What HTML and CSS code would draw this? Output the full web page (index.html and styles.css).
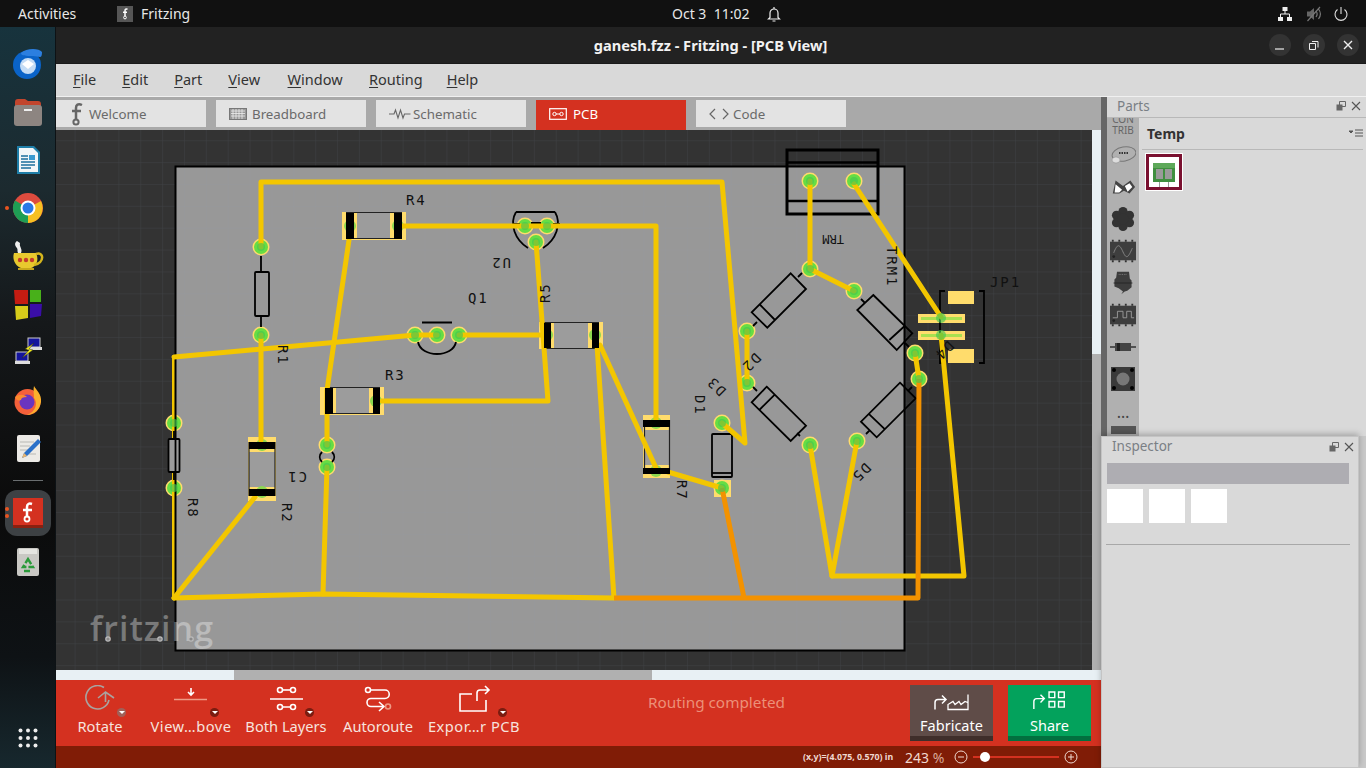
FILE: index.html
```html
<!DOCTYPE html>
<html lang="en">
<head>
<meta charset="utf-8">
<title>Fritzing</title>
<link rel="stylesheet" href="styles.css">
</head>
<body>
<header class="topbar">
  <span class="activities">Activities</span>
  <span class="appname">
    <svg class="appicon" viewBox="0 0 16 16"><rect width="16" height="16" fill="#565656"/><path d="M10.500 3.200C9 2.700 8 3.300 8 4.800V10M6 6.200h4" fill="none" stroke="#fff" stroke-width="1.500"/><circle cx="8" cy="11.500" r="1.400" fill="none" stroke="#fff"/></svg>
    Fritzing
  </span>
  <span class="clock"><span>Oct 3&nbsp; 11:02</span><svg class="bell" viewBox="0 0 16 16"><path d="M8 1v1.500M4 11.500V7a4 4 0 0 1 8 0v4.500l1.500 1.500h-11zM6.500 15h3" fill="none" stroke="#eee" stroke-width="1.200"/></svg></span>
  <span class="tray">
    <svg class="tray-ico tray-net" viewBox="0 0 16 16"><path d="M5.500 1h5v4h-5zM1 11h5v4H1zM10 11h5v4h-5z" fill="#eee"/><path d="M8 5v3M3.500 11V8h9v3" fill="none" stroke="#eee" stroke-width="1"/></svg>
    <svg class="tray-ico" viewBox="0 0 16 16"><path d="M1 5.500h3l4-3.500v12l-4-3.500H1z" fill="#666"/><path d="M10 5c1.300 1.700 1.300 4.300 0 6M12.500 3c2.300 3 2.300 7 0 10M1.500 15L14 1" fill="none" stroke="#777" stroke-width="1.200"/></svg>
    <svg class="tray-ico" viewBox="0 0 16 16"><path d="M8 1v7M4.500 3.500a6 6 0 1 0 7 0" fill="none" stroke="#ddd" stroke-width="1.100"/></svg>
  </span>
</header>

<div class="desktop">
  <nav class="dock">
    <div class="dock-item"><svg viewBox="0 0 32 32" class="dock-ico"><circle cx="15" cy="17" r="14" fill="#0a63c8"/><path d="M9 5C14 0 27 0 30 4 30 12 27 8 21 8 14 8 9 8 9 5z" fill="#2c7fe0"/><circle cx="16" cy="18" r="8" fill="#c4dcf5"/><path d="M10 16l6 5 6-5-6-4z" fill="#fff"/></svg></div>
    <div class="dock-item"><svg viewBox="0 0 32 32" class="dock-ico"><path d="M3 6q0-3 3-3h7l3 2h10q3 0 3 3v4H3z" fill="#c2452d"/><rect x="2" y="9" width="28" height="21" rx="3" fill="#8d8581"/><rect x="12" y="13" width="8" height="2" fill="#eee"/></svg></div>
    <div class="dock-item"><svg viewBox="0 0 32 32" class="dock-ico"><path d="M5 2h17l6 6v22H5z" fill="#1e7ea8"/><path d="M7 4h14l5 5v19H7z" fill="#f2f6f8"/><path d="M9 12h7M9 15h7M9 18h14M9 21h14M9 24h10" stroke="#1d6f9c" stroke-width="1.500"/><rect x="17" y="11" width="6" height="5" fill="#3a9ad0"/></svg></div>
    <div class="dock-item"><span class="run-dot"></span><svg viewBox="0 0 32 32" class="dock-ico"><circle cx="16" cy="16" r="15" fill="#dd4b3e"/><path d="M16 16 29 9a15 15 0 0 1-13 22z" fill="#f6c022"/><path d="M16 16 16 31A15 15 0 0 1 3 8.500z" fill="#1e9e54"/><circle cx="16" cy="16" r="7.500" fill="#fff"/><circle cx="16" cy="16" r="5.500" fill="#2a79e6"/></svg></div>
    <div class="dock-item"><svg viewBox="0 0 32 32" class="dock-ico"><path d="M2 13h22c3 6 1 13-5 15H9C3 26 0 19 2 13z" fill="#e8c92e"/><path d="M24 14c8-3 9 9-2 11" fill="none" stroke="#d4b51d" stroke-width="2.500"/><path d="M5 1c-3 2-2 5 0 7 1 2 0 3 1 5h3C11 9 7 7 8 3z" fill="#eee"/><circle cx="8" cy="20" r="2.200" fill="#c43b2b"/><circle cx="14" cy="20" r="2.200" fill="#c43b2b"/><circle cx="20" cy="20" r="2.200" fill="#c43b2b"/><path d="M6 28h16v2H6z" fill="#c6a71a"/></svg></div>
    <div class="dock-item"><svg viewBox="0 0 32 32" class="dock-ico"><path d="M2 2h14v14H3z" fill="#c41c12"/><path d="M18 2h11v12H18z" fill="#48b01a"/><path d="M3 18h13v12L4 32z" fill="#d6cc1a"/><path d="M18 16h12l-1 12-11 2z" fill="#3a0ea8"/></svg></div>
    <div class="dock-item"><svg viewBox="0 0 32 32" class="dock-ico"><rect x="16" y="2" width="12" height="9" fill="#14149c" stroke="#ccc"/><rect x="15" y="11" width="15" height="3" fill="#ddd"/><rect x="4" y="16" width="12" height="9" fill="#14149c" stroke="#ccc"/><rect x="3" y="25" width="15" height="3" fill="#ddd"/><path d="M22 7l-9 6 4 1-7 8 11-8-4-1z" fill="#f4ef18" stroke="#222" stroke-width=".5"/></svg></div>
    <div class="dock-item"><svg viewBox="0 0 32 32" class="dock-ico"><circle cx="15.500" cy="18" r="13" fill="#f4603a"/><path d="M22 2c2 4 8 8 7 16-1 8-8 13-14 13 9-3 11-12 7-17 0-4-1-8 0-12z" fill="#fcb02c"/><circle cx="15" cy="18" r="7.500" fill="#6a35c0"/><path d="M3 13c4-3 9-3 12 0-4 0-6 1-6 3-3 1-5 0-6-3z" fill="#fb8a2c"/></svg></div>
    <div class="dock-item"><svg viewBox="0 0 32 32" class="dock-ico"><rect x="5" y="3" width="23" height="27" rx="2" fill="#eceae6"/><path d="M8 10h14M8 14h10M8 18h8M14 22h10" stroke="#b8b8b4" stroke-width="1.200"/><path d="M26 7l3 3-14 14-5 2 2-5z" fill="#2a70c8"/><path d="M12 21l3 3-5 2z" fill="#eab46c"/></svg></div>
    <div class="dock-sep"></div>
    <div class="dock-active">
      <span class="run-dots"><i></i><i></i></span>
      <svg viewBox="0 0 30 30" class="dock-fritz"><rect width="30" height="30" fill="#d43120"/><rect y="27" width="30" height="3" fill="#8a2010"/><path d="M19 6c-3-1-5 0-5 3v9M10 12h9" fill="none" stroke="#fff" stroke-width="2.500"/><circle cx="14" cy="21" r="2.500" fill="none" stroke="#fff" stroke-width="1.800"/></svg>
    </div>
    <div class="dock-item"><svg viewBox="0 0 32 32" class="dock-ico"><rect x="5" y="2" width="22" height="28" rx="2" fill="#c9c8c4"/><rect x="7" y="3" width="18" height="5" fill="#e4e4e0"/><path d="M16 13l5 8h-10zM12 25h8" fill="none" stroke="#2a9a3a" stroke-width="2.400" stroke-dasharray="6 2"/></svg></div>
    <div class="dock-apps"><svg viewBox="0 0 20 20" class="apps-ico"><g fill="#eee"><circle cx="2.500" cy="2.500" r="2"/><circle cx="10" cy="2.500" r="2"/><circle cx="17.500" cy="2.500" r="2"/><circle cx="2.500" cy="10" r="2"/><circle cx="10" cy="10" r="2"/><circle cx="17.500" cy="10" r="2"/><circle cx="2.500" cy="17.500" r="2"/><circle cx="10" cy="17.500" r="2"/><circle cx="17.500" cy="17.500" r="2"/></g></svg></div>
  </nav>

  <main class="window">
    <div class="titlebar">
      <span class="title">ganesh.fzz - Fritzing - [PCB View]</span>
      <span class="win-btns">
        <span class="win-btn"><svg viewBox="0 0 12 12"><path d="M1 10h9" stroke="#eee" stroke-width="1.200"/></svg></span>
        <span class="win-btn"><svg viewBox="0 0 12 12"><path d="M1.500 4.500h6v6h-6zM4 2.500h6v6" fill="none" stroke="#eee" stroke-width="1"/></svg></span>
        <span class="win-btn"><svg viewBox="0 0 12 12"><path d="M2 2l8 8M10 2l-8 8" stroke="#eee" stroke-width="1.400"/></svg></span>
      </span>
    </div>
    <div class="menubar">
      <span class="menu-file"><u>F</u>ile</span>
      <span class="menu-edit"><u>E</u>dit</span>
      <span class="menu-part"><u>P</u>art</span>
      <span class="menu-view"><u>V</u>iew</span>
      <span class="menu-window"><u>W</u>indow</span>
      <span class="menu-routing"><u>R</u>outing</span>
      <span class="menu-help"><u>H</u>elp</span>
    </div>
    <div class="workspace">
      <section class="sketch">
        <div class="tabs">
          <div class="tab tab-wel"><svg class="tab-f" viewBox="0 0 14 24"><path d="M12 3C8 1 6 3 6 6v11M2 9h9" fill="none" stroke="#666" stroke-width="2.500"/><circle cx="6" cy="20" r="2.600" fill="none" stroke="#666" stroke-width="2"/></svg>Welcome</div>
          <div class="tab tab-bb"><svg class="tab-ico" viewBox="0 0 18 12"><rect x=".5" y=".5" width="17" height="11" fill="#999" stroke="#777"/><path d="M2 3h14M2 5.500h14M2 8h14M4 1v10M7 1v10M10 1v10M13 1v10" stroke="#eee" stroke-width=".8"/></svg>Breadboard</div>
          <div class="tab tab-sch"><svg class="tab-ico" viewBox="0 0 22 12"><path d="M0 6h5l1.500-4 2.500 8 2.500-8 2.500 8 1.500-4h6" fill="none" stroke="#666" stroke-width="1.100"/></svg>Schematic</div>
          <div class="tab tab-active"><svg class="tab-ico" viewBox="0 0 18 12"><rect x=".7" y=".7" width="16.600" height="10.600" fill="none" stroke="#fff" stroke-width="1.200"/><circle cx="5.500" cy="6" r="1.700" fill="none" stroke="#fff"/><circle cx="12.500" cy="6" r="1.700" fill="none" stroke="#fff"/><path d="M7 6h4" stroke="#fff"/></svg>PCB</div>
          <div class="tab tab-code"><svg class="tab-ico" viewBox="0 0 20 12"><path d="M6 1L1 6l5 5M14 1l5 5-5 5" fill="none" stroke="#666" stroke-width="1.200"/></svg>Code</div>
        </div>
        <div class="canvas-row">
          <div class="canvas">
            <svg class="pcb" viewBox="0 0 1036 540" width="1036" height="540">
              <defs>
                <pattern id="grid" x="9" y="9" width="21.870" height="21.870" patternUnits="userSpaceOnUse">
                  <path d="M21.870 0H0V21.870" class="gridline"/>
                </pattern>
                <g id="pad"><circle r="8.500" class="pad-ring"/><circle r="7" class="pad-green"/></g>
              </defs>
              <rect width="1036" height="540" class="bg"/>
              <g transform="translate(-56 -130)">
                <rect x="175.500" y="166.500" width="729" height="484" class="board"/>
                <rect x="56" y="130" width="1036" height="540" fill="url(#grid)"/>

                <!-- footprints: SMD resistors -->
                <g class="smd"><rect x="342" y="212" width="64" height="28"/><rect x="320" y="387" width="64" height="28"/><rect x="539" y="322" width="64" height="27"/><rect x="643" y="415" width="27" height="63"/><rect x="248" y="437" width="28" height="64"/><rect x="714" y="480" width="17" height="17"/><rect x="948" y="291" width="26" height="13"/><rect x="948" y="349" width="26" height="14"/><rect x="918" y="314" width="47" height="9"/><rect x="918" y="331" width="47" height="9"/></g>
                <g class="smd-body"><rect x="357" y="213" width="33" height="26"/><rect x="336" y="388" width="33" height="26"/><rect x="554" y="323" width="34" height="25"/><rect x="644" y="430" width="25" height="35"/><rect x="249" y="452" width="26" height="35"/></g>
                <path class="silk-thin" d="M346 212.500h56M346 238.500h56M325 387.500h55M325 413.500h55M544 322.500h55M544 348.500h55M644.500 420v54M669.500 420v54M249 442v54M275 442v54"/>
                <g class="smd-pad"><circle cx="350" cy="226" r="6"/><circle cx="398" cy="226" r="6"/><circle cx="376" cy="401" r="6"/><circle cx="547" cy="335" r="6"/><circle cx="595" cy="335" r="6"/><circle cx="656" cy="423" r="6"/><circle cx="656" cy="471" r="6"/><circle cx="262" cy="445" r="6"/><circle cx="262" cy="492" r="6"/></g>
                <g class="green-line"><path d="M921 318.500h41M921 335.500h41"/></g>

                <!-- pads -->
                <use href="#pad" x="261" y="247"/><use href="#pad" x="261" y="335"/>
                <use href="#pad" x="415" y="335"/><use href="#pad" x="437" y="335"/><use href="#pad" x="459" y="335"/>
                <use href="#pad" x="525" y="226"/><use href="#pad" x="547" y="226"/><use href="#pad" x="536" y="242"/>
                <use href="#pad" x="174" y="423"/><use href="#pad" x="174" y="488"/>
                <use href="#pad" x="327" y="445"/><use href="#pad" x="327" y="467"/>
                <use href="#pad" x="722" y="423"/><use href="#pad" x="722" y="488"/>
                <use href="#pad" x="747" y="331"/><use href="#pad" x="747" y="383"/>
                <use href="#pad" x="810" y="181"/><use href="#pad" x="854" y="181"/>
                <use href="#pad" x="810" y="269"/><use href="#pad" x="854" y="291"/>
                <use href="#pad" x="915" y="353"/><use href="#pad" x="919" y="379"/>
                <use href="#pad" x="810" y="445"/><use href="#pad" x="857" y="441"/>

                <path d="M174 357V598" class="trace-thin"/>
                <!-- silkscreen -->
                <rect x="787" y="150" width="91" height="64" class="silk3"/>
                <path d="M787 162.500h91M787 201h91" class="silk2"/>
                <rect x="175.500" y="166.500" width="729" height="484" class="edge"/>
                <g class="silk">
                  <path d="M261 256v16M261 316v11M174 431v9M174 472v8"/>
                  <rect x="255" y="272" width="14" height="44" rx="1"/>
                  <rect x="168.500" y="439" width="11" height="33" rx="1" class="silk-filled"/>
                  <path d="M175.500 439v33"/>
                  <path d="M422 322.500h30M418 342c3 16 35 16 38 0"/>
                  <path d="M516 212h39M516 212c-7 12-1 28 12 36M555 212c7 12 1 28-12 36M513 224h7M553 224h7M531 223h10"/>
                  <path d="M322 452c-3 3-3 7 0 10M332 452c3 3 3 7 0 10"/>
                  <rect x="712" y="434" width="20" height="43" rx="1"/><path d="M712 473h20"/>
                  <path d="M790.700 273.300 806 289 767.300 327.700 751.700 312.300zM759.300 304 775 320M798 277l4-4M757 322l-4 4"/>
                  <path d="M873.300 295 912.300 333.300 896.700 350 857.300 310zM889.300 340 904.700 326M865 303l-4-4M905 343l4 4"/>
                  <path d="M766.700 386.700 806 425.700 790.700 441 751.700 402.300zM759.300 410 775 394.300M797 433l3 3M757 391l-4-4"/>
                  <path d="M900 382.700 915.700 398.300 876.700 437.300 861 421.700zM869.300 414.300 885 429.300M908 391l4-4M870 430l-4 4"/>
                  <path d="M945 291h-5v72h5M979 291h5v72h-5"/>
                </g>

                <!-- traces -->
                <g class="trace">
                  <path d="M261 247V182H722L745 443 722 423"/>
                  <path d="M402 226H656V423"/>
                  <path d="M536 242 548 401H382"/>
                  <path d="M349 240 327 390V445"/>
                  <path d="M415 335H437M459 335H545"/>
                  <path d="M415 335 174 357"/>
                  <path d="M261 335V440"/>
                  <path d="M174 598 255 497"/>
                  <path d="M174 598 323 594 614 598 597 345"/>
                  <path d="M323 594 327 467"/>
                  <path d="M600 345 656 468"/>
                  <path d="M668 472 722 488"/>
                  <path d="M747 331V383"/>
                  <path d="M810 181V269L854 291"/>
                  <path d="M854 184 941 317"/>
                  <path d="M941 335 964 576H832L810 445"/>
                  <path d="M832 576 857 441"/>
                  <path d="M915 353 919 379"/>
                </g>
                <g class="trace-bottom">
                  <path d="M722 488 744 598"/>
                  <path d="M614 598H918L919 379"/>
                </g>
                <g fill="#000"><rect x="346" y="213" width="8" height="26"/><rect x="394" y="213" width="8" height="26"/><rect x="325" y="388" width="8" height="26"/><rect x="373" y="388" width="7" height="26"/><rect x="544" y="323" width="7" height="25"/><rect x="592" y="323" width="7" height="25"/><rect x="643" y="420" width="27" height="7"/><rect x="643" y="468" width="27" height="6"/><rect x="249" y="442" width="26" height="7"/><rect x="249" y="489" width="26" height="7"/></g>

                <!-- pad centres -->
                <g class="pad-core">
                  <circle cx="261" cy="247" r="4"/><circle cx="261" cy="335" r="4"/><circle cx="415" cy="335" r="4"/><circle cx="437" cy="335" r="4"/><circle cx="459" cy="335" r="4"/><circle cx="525" cy="226" r="4"/><circle cx="547" cy="226" r="4"/><circle cx="536" cy="242" r="4"/><circle cx="174" cy="423" r="4"/><circle cx="174" cy="488" r="4"/><circle cx="327" cy="445" r="4"/><circle cx="327" cy="467" r="4"/><circle cx="722" cy="423" r="4"/><circle cx="722" cy="488" r="4"/><circle cx="747" cy="331" r="4"/><circle cx="747" cy="383" r="4"/><circle cx="810" cy="181" r="4"/><circle cx="854" cy="181" r="4"/><circle cx="810" cy="269" r="4"/><circle cx="854" cy="291" r="4"/><circle cx="915" cy="353" r="4"/><circle cx="919" cy="379" r="4"/><circle cx="810" cy="445" r="4"/><circle cx="857" cy="441" r="4"/><circle cx="941" cy="318" r="5"/><circle cx="941" cy="335" r="5"/>
                </g>

                <!-- labels -->
                <g class="label">
                  <text x="406" y="205">R4</text>
                  <text x="468" y="303">Q1</text>
                  <text x="385" y="380">R3</text>
                  <text x="990" y="287">JP1</text>
                  <text transform="translate(278 345) rotate(90)">R1</text>
                  <text transform="translate(188 498) rotate(90)">R8</text>
                  <text transform="translate(282 503) rotate(90)">R2</text>
                  <text transform="translate(677 480) rotate(90)">R7</text>
                  <text transform="translate(695 395) rotate(90)">D1</text>
                  <text transform="translate(550 303) rotate(-90)">R5</text>
                  <text transform="translate(511 258) rotate(180)">U2</text>
                  <text transform="translate(307 472) rotate(180)">C1</text>
                  <text transform="translate(844 235) rotate(180)" class="label-small">TRM</text>
                  <text transform="translate(887 246) rotate(90)">TRM1</text>
                  <text transform="translate(727 390) rotate(225)">D3</text>
                  <text transform="translate(755 352) rotate(135)">D2</text>
                  <text transform="translate(865 462) rotate(135)">D5</text>
                  <text transform="translate(948 340) rotate(135)">D4</text>
                </g>
                <text x="90" y="641" class="logo" textLength="123">fritzing</text>
                <g class="logo-rings"><circle cx="108" cy="639" r="2.200"/><circle cx="160" cy="639" r="2.200"/><circle cx="191" cy="639" r="2.200"/></g>
              </g>
            </svg>
          </div>
          <div class="vscroll"><div class="vtrack"></div><div class="vthumb"></div></div>
          <div class="hscroll"><div class="htrack"></div><div class="hthumb"></div><div class="htrack-end"></div></div>
        </div>
        <div class="toolbar">
          <div class="tool tool-rotate"><svg class="tool-ico" viewBox="0 0 34 27"><path d="M21 2.500A11.700 11.700 0 1 0 26 15" fill="none" stroke="#a9a3a0" stroke-width="1.600"/><path d="M15 14l7.500-6 8.500 6M22.500 8v10" fill="none" stroke="#a9a3a0" stroke-width="1.600" transform="translate(0 -1)"/></svg><span class="caret caret-off"></span><span>Rotate</span></div>
          <div class="tool tool-view"><svg class="tool-ico" viewBox="0 0 34 27"><path d="M17 3v7M14 7l3 3 3-3" fill="none" stroke="#fff" stroke-width="1.600"/><path d="M0 14.500h33" stroke="#ee9a85" stroke-width="1.600"/></svg><span class="caret"></span><span>View…bove</span></div>
          <div class="tool tool-both"><svg class="tool-ico" viewBox="0 0 34 27"><g fill="none" stroke="#fff" stroke-width="1.600"><circle cx="11" cy="5" r="2.500"/><circle cx="24" cy="5" r="2.500"/><path d="M13.500 5h8"/><circle cx="11" cy="22" r="2.500"/><circle cx="24" cy="22" r="2.500"/><path d="M13.500 22h8M1 14h33"/></g></svg><span class="caret"></span><span>Both Layers</span></div>
          <div class="tool tool-auto"><svg class="tool-ico" viewBox="0 0 34 27"><g fill="none" stroke="#fff" stroke-width="1.600"><circle cx="7" cy="5" r="2.500"/><path d="M10 5h14a4 4 0 0 1 0 8.500H10a4 4 0 0 0 0 8h12M18 17l5 4.500-5 4.500"/></g><circle cx="26" cy="21.500" r="2.500" fill="none" stroke="#ee9a85" stroke-width="1.600" transform="translate(1 0)"/></svg><span class="caret caret-none"></span><span>Autoroute</span></div>
          <div class="tool tool-export"><svg class="tool-ico" viewBox="0 0 34 27"><path d="M15 9H3v17h26V15" fill="none" stroke="#fff" stroke-width="1.600"/><path d="M20 16V8a3 3 0 0 1 3-3h9M28 1l4 4-4 4" fill="none" stroke="#fff" stroke-width="1.600"/></svg><span class="caret"></span><span>Expor…r PCB</span></div>
          <div class="routing">Routing completed</div>
          <div class="cta cta-fab"><svg class="cta-ico" viewBox="0 0 38 18"><path d="M2 16V9a3 3 0 0 1 3-3h7M9 2l4 4-4 4" fill="none" stroke="#fff" stroke-width="1.500"/><path d="M15 16v-5l5-3 2 3 4-3 2 3 4-3 3 1V1v15z" fill="none" stroke="#fff" stroke-width="1.300"/></svg><span>Fabricate</span></div>
          <div class="cta cta-share"><svg class="cta-ico" viewBox="0 0 38 20"><path d="M2 19V11a3 3 0 0 1 3-3h7M9 4l4 4-4 4" fill="none" stroke="#fff" stroke-width="1.500"/><path d="M18 1h6v6h-6zM28 1h6v6h-6zM18 11h6v6h-6zM28 11h6v6h-6z" fill="none" stroke="#fff" stroke-width="1.500"/></svg><span>Share</span></div>
        </div>
        <div class="statusbar">
          <span class="coords">(x,y)=(4.075, 0.570) in</span>
          <span class="zoom-val">243 <em>%</em></span>
          <svg class="zoom-btn" viewBox="0 0 14 14"><circle cx="7" cy="7" r="6" fill="none" stroke="#f0d8d0" stroke-width="1"/><path d="M4 7h6" stroke="#f0d8d0"/></svg>
          <span class="slider"><span class="slider-thumb"></span></span>
          <svg class="zoom-btn" viewBox="0 0 14 14"><circle cx="7" cy="7" r="6" fill="none" stroke="#f0d8d0" stroke-width="1"/><path d="M4 7h6M7 4v6" stroke="#f0d8d0"/></svg>
        </div>
      </section>

      <aside class="side">
        <section class="parts">
          <div class="splitter"></div>
          <div class="parts-main">
            <div class="dock-head parts-head">
              <span>Parts</span>
              <span class="dock-btns">
                <svg viewBox="0 0 10 10"><path d="M3.500 0.500h6v5h-6z" fill="none" stroke="#666"/><rect x=".5" y="3.500" width="6" height="6" fill="#666"/></svg>
                <svg viewBox="0 0 10 10"><path d="M1 1l8 8M9 1l-8 8" stroke="#555" stroke-width="1.100"/></svg>
              </span>
            </div>
            <div class="parts-body">
              <div class="bins">
                <div class="contrib">CON<br>TRIB</div>
                <svg class="bin" viewBox="0 0 26 20"><ellipse cx="14" cy="9" rx="12" ry="7" fill="none" stroke="#777" transform="rotate(-10 14 9)"/><ellipse cx="6" cy="15" rx="4" ry="3" fill="#ddd" stroke="#888" stroke-width=".5"/><path d="M9 8h10" stroke="#333" stroke-width="2" stroke-dasharray="1.500 1"/></svg>
                <svg class="bin" viewBox="0 0 28 20"><path d="M3 17L6 3l8 6 8-6 5 7-6 7-6-3-5 3z" fill="#444"/><path d="M6 7l7 6-3 3H5zM16 9l5-3 3 4-5 5z" fill="#fff"/></svg>
                <svg class="bin" viewBox="0 0 26 26"><g fill="#333"><circle cx="13" cy="5" r="5"/><circle cx="13" cy="21" r="5"/><circle cx="6" cy="9" r="5"/><circle cx="20" cy="9" r="5"/><circle cx="6" cy="17" r="5"/><circle cx="20" cy="17" r="5"/><circle cx="13" cy="13" r="6"/></g></svg>
                <svg class="bin" viewBox="0 0 28 24"><rect y="2" width="28" height="20" fill="#3e3e3e"/><path d="M4 14c4-10 6-10 10-1s6 5 10-4" fill="none" stroke="#888"/><circle cx="4" cy="18" r="1.500" fill="#222"/><path d="M3 0v2M10 0v2M17 0v2M24 0v2M3 22v2M10 22v2M17 22v2M24 22v2" stroke="#333" stroke-width="2"/></svg>
                <svg class="bin" viewBox="0 0 22 28"><path d="M4 1h14l1 8 2 2v8l-5 4-3 1-4 3 2-3-5-4-5-2v-8l2-2z" fill="#3d3d3d"/><path d="M6 4h10" stroke="#888" stroke-dasharray="1 1"/><path d="M0 14h22" stroke="#222"/></svg>
                <svg class="bin" viewBox="0 0 28 24"><rect y="2" width="28" height="20" fill="#3e3e3e"/><path d="M3 15h5V8h6v7h4V8h5v7h3" fill="none" stroke="#999"/><circle cx="4" cy="18" r="1.500" fill="#222"/><path d="M3 0v2M10 0v2M17 0v2M24 0v2M3 22v2M10 22v2M17 22v2M24 22v2" stroke="#333" stroke-width="2"/></svg>
                <svg class="bin bin-diode" viewBox="0 0 26 8"><path d="M0 4h26" stroke="#333" stroke-width="1.500"/><rect x="5" y="0" width="16" height="8" fill="#444"/><rect x="7" y="0" width="3" height="8" fill="#222"/></svg>
                <svg class="bin" viewBox="0 0 24 24"><rect width="24" height="24" fill="#3a3a3a"/><circle cx="12" cy="12" r="6.500" fill="#777"/><g fill="#000"><circle cx="3" cy="3" r="2"/><circle cx="21" cy="3" r="2"/><circle cx="3" cy="21" r="2"/><circle cx="21" cy="21" r="2"/></g></svg>
                <div class="bin-dots">…</div>
                <div class="bin-cut"></div>
              </div>
              <div class="temp">
                <div class="temp-head"><span>Temp</span><svg class="temp-menu" viewBox="0 0 14 8"><path d="M0 2h4L2 4zM6 1h8M6 4h8M6 7h8" stroke="#555" fill="#555"/></svg></div>
                <div class="thumb"><svg viewBox="0 0 30 30" width="30" height="30"><rect width="30" height="30" fill="#fff"/><rect x="4" y="6" width="22" height="19" fill="#3f8f3f"/><rect x="4" y="6" width="22" height="5" fill="#5ea85a"/><rect x="7" y="12" width="7" height="10" fill="#9a9a9a"/><rect x="16" y="12" width="7" height="10" fill="#9a9a9a"/><path d="M10.500 25v5M19.500 25v5" stroke="#999"/></svg></div>
              </div>
            </div>
          </div>
        </section>
        <section class="inspector">
          <div class="dock-head insp-head">
            <span>Inspector</span>
            <span class="dock-btns">
              <svg viewBox="0 0 10 10"><path d="M3.500 0.500h6v5h-6z" fill="none" stroke="#666"/><rect x=".5" y="3.500" width="6" height="6" fill="#666"/></svg>
              <svg viewBox="0 0 10 10"><path d="M1 1l8 8M9 1l-8 8" stroke="#555" stroke-width="1.100"/></svg>
            </span>
          </div>
          <div class="insp-bar"></div>
          <div class="insp-boxes"><i></i><i></i><i></i></div>
          <div class="insp-line"></div>
        </section>
      </aside>
    </div>
  </main>
</div>
</body>
</html>
```

FILE: styles.css
```css
* { box-sizing: border-box; }
html, body { margin: 0; padding: 0; width: 1366px; height: 768px; overflow: hidden; background: #111; }
body { font-family: "Noto Sans", "Open Sans", sans-serif; display: flex; flex-direction: column; }
svg { display: block; flex: none; }

/* GNOME top bar */
.topbar { height: 27px; flex: none; background: #111; color: #e8e8e8; font-size: 14px; display: flex; align-items: center; position: relative; }
.activities { margin-left: 18px; width: 99px; }
.appname { display: flex; align-items: center; gap: 8px; }
.appicon { width: 16px; height: 16px; }
.clock { position: absolute; left: 672px; top: 0; height: 27px; display: flex; align-items: center; gap: 17px; }
.bell { width: 16px; height: 16px; }
.tray { margin-left: auto; margin-right: 17px; display: flex; gap: 11px; }
.tray-ico { width: 16px; height: 16px; }
.tray-net { margin-right: 2px; }

/* Dock */
.desktop { flex: 1; display: flex; min-height: 0; }
.dock { width: 56px; flex: none; padding-top: 13px; display: flex; flex-direction: column; align-items: center;
  background: linear-gradient(#17333d 0, #1c2a2f 22%, #15181a 40%, #0b0b0b 65%, #0e1215 85%, #17282e 100%); border-right: 1px solid #0d1215; }
.dock-item { width: 56px; height: 48px; flex: none; display: flex; align-items: center; justify-content: center; position: relative; }
.dock-ico { width: 32px; height: 32px; }
.run-dot { position: absolute; left: 5px; top: 22px; width: 4px; height: 4px; border-radius: 50%; background: #e95420; }
.dock-sep { width: 30px; height: 1px; background: #6a6e70; margin: 8px 0 9px; flex: none; }
.dock-active { width: 46px; height: 46px; flex: none; background: #3d4144; border-radius: 12px; display: flex; align-items: center; justify-content: center; position: relative; margin-bottom: 2px; }
.dock-fritz { width: 30px; height: 30px; }
.run-dots { position: absolute; left: 0; top: 17px; display: flex; flex-direction: column; gap: 3px; }
.run-dots i { width: 4px; height: 4px; border-radius: 50%; background: #e95420; }
.dock-apps { margin-top: auto; margin-bottom: 20px; }
.apps-ico { width: 20px; height: 20px; }

/* Window */
.window { flex: 1; display: flex; flex-direction: column; min-width: 0; }
.titlebar { height: 37px; flex: none; background: #222; border-bottom: 1px solid #1a1a1a; color: #f2f2f2; font-weight: 700; font-size: 14.600px; display: flex; align-items: center; justify-content: center; position: relative; }
.title { margin-left: -1px; }
.win-btns { position: absolute; right: 7px; top: 7px; display: flex; gap: 12px; }
.win-btn { width: 22px; height: 22px; border-radius: 50%; background: #333; display: flex; align-items: center; justify-content: center; }
.win-btn svg { width: 12px; height: 12px; }

.menubar { height: 33px; flex: none; background: #d9d9d9; color: #333; font-size: 14.500px; display: flex; align-items: center; border-bottom: 1px solid #f0f0f0; padding-bottom: 2px; }
.menu-file { margin-left: 17px; }
.menu-edit { margin-left: 26px; }
.menu-part { margin-left: 26px; }
.menu-view { margin-left: 26px; }
.menu-window { margin-left: 27.500px; }
.menu-routing { margin-left: 26.500px; }
.menu-help { margin-left: 24px; }
u { text-underline-offset: 2px; text-decoration-thickness: 1px; }

.workspace { flex: 1; display: flex; min-height: 0; }
.sketch { width: 1045px; flex: none; display: flex; flex-direction: column; }

.tabs { height: 33px; flex: none; background: #a9a9a9; padding-top: 3px; display: flex; gap: 10px; }
.tab { width: 150px; height: 27px; background: #e3e3e3; color: #6a6a6a; font-size: 13.300px; display: flex; align-items: center; gap: 6px; padding-left: 13px; }
.tab-f { width: 14px; height: 24px; margin-left: 1px; }
.tab-wel { gap: 5px; }
.tab-bb { gap: 5px; }
.tab-code { gap: 4px; }
.tab-ico { height: 12px; width: auto; }
.tab-sch { gap: 2px; }
.tab-active { background: #d43120; color: #fff; height: 30px; padding-bottom: 3px; }

.canvas-row { display: grid; grid-template-columns: 1036px 9px; grid-template-rows: 540px 10px; flex: none; }
.canvas { width: 1036px; height: 540px; overflow: hidden; }
.vscroll { display: flex; flex-direction: column; }
.vtrack { height: 224px; background: #e8f0f4; }
.vthumb { flex: 1; background: #b0b0b0; }
.hscroll { display: flex; grid-column: 1 / 3; }
.htrack { width: 178px; background: #e8f0f4; }
.hthumb { width: 418px; background: #b0b0b0; }
.htrack-end { flex: 1; background: #e8f0f4; }

/* PCB */
.bg { fill: #333; }
.board { fill: #989898; }
.gridline { fill: none; stroke: #8fa0b0; stroke-opacity: .14; stroke-width: 1; }
.edge { fill: none; stroke: #000; stroke-width: 2; }
.pad-ring { fill: #ffdc6c; }
.pad-green { fill: #66dd44; }
.smd { fill: #ffdc6c; }
.smd-body { fill: #9c9c9c; }
.silk-thin { fill: none; stroke: #222; stroke-width: 1.200; }
.smd-pad { fill: #8cd850; }
.green-line { fill: none; stroke: #a8e050; stroke-width: 3; }
.silk { fill: none; stroke: #000; stroke-width: 1.800; }
.silk .silk-filled { fill: #9c9c9c; }
.silk2 { fill: none; stroke: #000; stroke-width: 2.500; }
.silk3 { fill: none; stroke: #000; stroke-width: 3; }
.trace { fill: none; stroke: #f3c600; stroke-width: 5; stroke-linejoin: round; stroke-linecap: round; }
.trace-thin { fill: none; stroke: #f3c600; stroke-width: 4; }
.trace-bottom { fill: none; stroke: #f39200; stroke-width: 5; stroke-linejoin: round; }
.pad-core { fill: #44c850; opacity: .65; }
.label { font-family: "DejaVu Sans Mono", monospace; font-size: 14px; fill: #111; letter-spacing: 1.900px; }
.label-small { font-size: 12px; letter-spacing: 0; }
.logo { font-family: "Open Sans", sans-serif; font-weight: 600; font-size: 34px; fill: #fff; fill-opacity: .34; }
.logo-rings { fill: #8a8a8a; stroke: #bbb; stroke-width: 1.200; }

/* Toolbar */
.toolbar { height: 66px; flex: none; background: #d43120; color: #f7e3de; display: flex; align-items: flex-start; font-size: 14.670px; padding-right: 10px; }
.tool { display: flex; flex-direction: column; align-items: center; position: relative; padding-top: 5px; }
.tool-rotate { width: 88px; }
.tool-view { width: 94px; }
.tool-both { width: 96px; }
.tool-auto { width: 88px; }
.tool-export { width: 104px; }
.tool-view span:last-child, .tool-export span:last-child { letter-spacing: .5px; }
.tool-ico { width: 34px; height: 27px; margin-bottom: 4px; }
.tool span:last-child { white-space: nowrap; line-height: 20px; }
.caret { position: absolute; top: 28px; left: calc(50% + 19px); width: 9px; height: 9px; border-radius: 50%; background: #7a1c10; }
.caret::after { content: ""; position: absolute; left: 1.500px; top: 3px; border: 3px solid transparent; border-top-color: #fff; }
.tool-rotate .caret { left: calc(50% + 17px); }
.tool-export .caret { left: calc(50% + 24px); }
.caret-off { background: #a06058; }
.caret-none { display: none; }
.routing { margin-left: 122px; margin-top: 12px; font-size: 15.300px; color: #ec9078; white-space: nowrap; }
.cta { width: 83px; height: 56px; margin-top: 5px; flex: none; color: #fff; display: flex; flex-direction: column; align-items: center; font-size: 14.500px; line-height: 18px; }
.cta-fab { background: #5f4c48; border-bottom: 5px solid #3f2e2a; margin-left: auto; padding-top: 8px; }
.cta-share { background: #03a25c; border-bottom: 5px solid #02703f; margin-left: 15px; padding-top: 6px; }
.cta-ico { width: 38px; height: 19px; margin-bottom: 4px; }
.cta-share .cta-ico { margin-bottom: 6px; }

.statusbar { height: 22px; flex: none; background: #801c06; display: flex; align-items: center; color: #f0d8d0; position: relative; }
.coords { font-size: 8.800px; font-weight: 700; margin-left: 747px; width: 102px; }
.zoom-val { font-size: 14px; width: 49px; }
.zoom-val em { font-style: normal; color: #d8a898; }
.zoom-btn { width: 14px; height: 14px; }
.slider { width: 86px; height: 2px; background: #d43120; margin: 0 5px; position: relative; }
.slider-thumb { position: absolute; left: 7px; top: -4px; width: 10px; height: 10px; border-radius: 50%; background: #fff; }

/* Right docks */
.side { flex: 1; display: flex; flex-direction: column; background: #c9c9c9; min-width: 0; }
.parts { height: 339px; flex: none; display: flex; }
.splitter { width: 6px; background: #666; }
.parts-main { flex: 1; background: #d9d9d9; display: flex; flex-direction: column; min-width: 0; }
.dock-head { display: flex; justify-content: space-between; color: #7a7f85; font-size: 13.500px; }
.parts-head { height: 21px; padding: 0 5px 3px 10px; border-bottom: 1px solid #b8b8b8; flex: none; align-items: center; }
.dock-btns { display: flex; gap: 5px; }
.dock-btns svg { width: 10px; height: 10px; }
.parts-body { flex: 1; display: flex; min-height: 0; }
.bins { width: 32px; flex: none; background: #b0b0b0; display: flex; flex-direction: column; align-items: center; overflow: hidden; }
.contrib { font-size: 10px; line-height: 11px; color: #666; margin-top: -4px; text-align: center; height: 21px; flex: none; }
.bin { width: 26px; height: 24px; margin-top: 8px; }
.bin-diode { height: 8px; margin: 16px 0 8px; }
.bin-dots { font-size: 16px; color: #444; line-height: 18px; margin-top: 12px; flex: none; }
.bin-cut { width: 25px; height: 8px; background: #555; margin-top: 5px; flex: none; }
.temp { flex: 1; padding: 4px 3px 0 3px; }
.temp-head { display: flex; justify-content: space-between; align-items: center; font-weight: 700; font-size: 14px; color: #333; height: 28px; border-bottom: 1px solid #b8b8b8; padding: 0 0 5px 5px; }
.temp-menu { width: 14px; height: 8px; margin-right: 0; }
.thumb { width: 36px; height: 36px; margin: 4px 0 0 4px; border: 3px solid #7a1030; outline: 1px solid #fff; background: #fff; }
.inspector { width: 258px; flex: 1; background: #d9d9d9; border: 1px solid #c4c4c4; padding: 0 6px 0 5px; box-shadow: 0 -2px 6px rgba(0,0,0,.25); position: relative; }
.insp-head { height: 26px; padding: 0 0 0 5px; margin-right: -2px; align-items: flex-start; line-height: 18px; }
.insp-head .dock-btns { margin-top: 5px; }
.insp-bar { width: 242px; height: 21px; background: #aeadb2; }
.insp-boxes { display: flex; gap: 6px; margin-top: 5px; }
.insp-boxes i { width: 36px; height: 34px; background: #fff; }
.insp-line { height: 1px; width: 244px; background: #a8a8a8; margin-top: 21px; margin-left: -1px; }
```
